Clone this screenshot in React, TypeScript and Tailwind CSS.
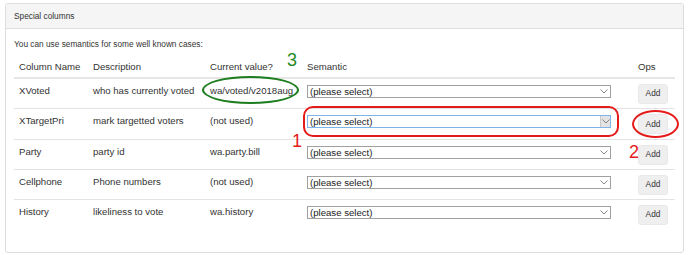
import React from "react";

type Row = { name: string; desc: string; cur: string; focus?: boolean };

const rows: Row[] = [
  { name: "XVoted", desc: "who has currently voted", cur: "wa/voted/v2018aug" },
  { name: "XTargetPri", desc: "mark targetted voters", cur: "(not used)", focus: true },
  { name: "Party", desc: "party id", cur: "wa.party.bill" },
  { name: "Cellphone", desc: "Phone numbers", cur: "(not used)" },
  { name: "History", desc: "likeliness to vote", cur: "wa.history" },
];

function Chevron() {
  return (
    <svg width="8" height="5" viewBox="0 0 8 5" className="block">
      <path d="M0.5 0.5 L4 4 L7.5 0.5" fill="none" stroke="#7a7a7a" strokeWidth="0.9" />
    </svg>
  );
}

function Select({ focus }: { focus?: boolean }) {
  return (
    <div
      className={
        "mt-[1px] h-[13px] w-[304px] flex items-center bg-white border " +
        (focus ? "border-[#7eb4ea]" : "border-[#a0a0a0]")
      }
    >
      <span className="flex-1 pl-[2px] text-[9.6px] leading-[11px] text-[#222]">(please select)</span>
      {focus ? (
        <span className="h-[11px] w-[10px] flex items-center justify-center bg-[#e3e3e3] border-l border-[#c9c9c9]">
          <Chevron />
        </span>
      ) : (
        <span className="w-[10px] mr-[1px] flex items-center justify-center">
          <Chevron />
        </span>
      )}
    </div>
  );
}

export default function App() {
  return (
    <div
      className="relative w-[689px] h-[255px] bg-white text-[#333333] overflow-hidden"
      style={{ fontFamily: '"Liberation Sans", Arial, sans-serif' }}
    >
      <div className="absolute left-0 top-0 w-full h-full pt-[3px] pl-[5px]">
        <div className="w-[679px] h-[250px] border border-[#dddddd] rounded-[3px]">
          <div className="h-[25px] bg-[#f5f5f5] border-b border-[#dddddd] pl-[8px] flex items-center text-[8.3px] rounded-t-[3px]">
            Special columns
          </div>
          <div className="pl-[8px] pr-[7px] pt-[9px]">
            <p className="text-[8.3px] leading-[12px]">You can use semantics for some well known cases:</p>
            <table className="mt-[4.5px] w-[661px] table-fixed border-collapse text-[9.6px] leading-[13.7px]">
              <colgroup>
                <col className="w-[74px]" />
                <col className="w-[117px]" />
                <col className="w-[97px]" />
                <col className="w-[331px]" />
                <col className="w-[42px]" />
              </colgroup>
              <thead>
                <tr className="border-b-2 border-[#e6e6e6]">
                  <th className="text-left font-normal pl-[5px] pt-[5.5px] pb-[3.4px]">Column Name</th>
                  <th className="text-left font-normal pl-[5px] pt-[5.5px] pb-[3.4px]">Description</th>
                  <th className="text-left font-normal pl-[5px] pt-[5.5px] pb-[3.4px]">Current value?</th>
                  <th className="text-left font-normal pl-[5px] pt-[5.5px] pb-[3.4px]">Semantic</th>
                  <th className="text-left font-normal pl-[5px] pt-[5.5px] pb-[3.4px]">Ops</th>
                </tr>
              </thead>
              <tbody>
                {rows.map((r, i) => (
                  <tr key={r.name} className={i < rows.length - 1 ? "border-b border-[#e3e3e3]" : ""}>
                    <td className="align-top pl-[5px] pt-[5px] pb-[4.3px] whitespace-nowrap">{r.name}</td>
                    <td className="align-top pl-[5px] pt-[5px] pb-[4.3px] whitespace-nowrap">{r.desc}</td>
                    <td className="align-top pl-[5px] pt-[5px] pb-[4.3px] whitespace-nowrap">{r.cur}</td>
                    <td className="align-top pl-[5px] pt-[5px] pb-[4.3px]">
                      <Select focus={r.focus} />
                    </td>
                    <td className="align-top pl-[5px] pt-[5px] pb-[4.3px]">
                      <button className="h-[20px] w-[30px] rounded-[3px] bg-[#efefef] border border-[#e9e9e9] text-[8.3px] text-[#333] flex items-center justify-center">
                        Add
                      </button>
                    </td>
                  </tr>
                ))}
              </tbody>
            </table>
          </div>
        </div>
      </div>

      {/* annotations */}
      <div className="absolute left-[202px] top-[76px] w-[97px] h-[28px] rounded-[50%] border-[2.5px] border-[#1e7d1e]" />
      <div className="absolute left-[287px] top-[50px] text-[18px] leading-[20px] text-[#1e8a1e]">3</div>
      <div className="absolute left-[303px] top-[106px] w-[316px] h-[31px] rounded-[10px] border-[2.5px] border-[#e41b1b]" />
      <div className="absolute left-[292px] top-[131px] text-[18px] leading-[20px] text-[#e41b1b]">1</div>
      <div className="absolute left-[632px] top-[110px] w-[47px] h-[28px] rounded-[50%] border-[2.5px] border-[#e41b1b]" />
      <div className="absolute left-[629px] top-[142px] text-[18px] leading-[20px] text-[#e41b1b]">2</div>
    </div>
  );
}
